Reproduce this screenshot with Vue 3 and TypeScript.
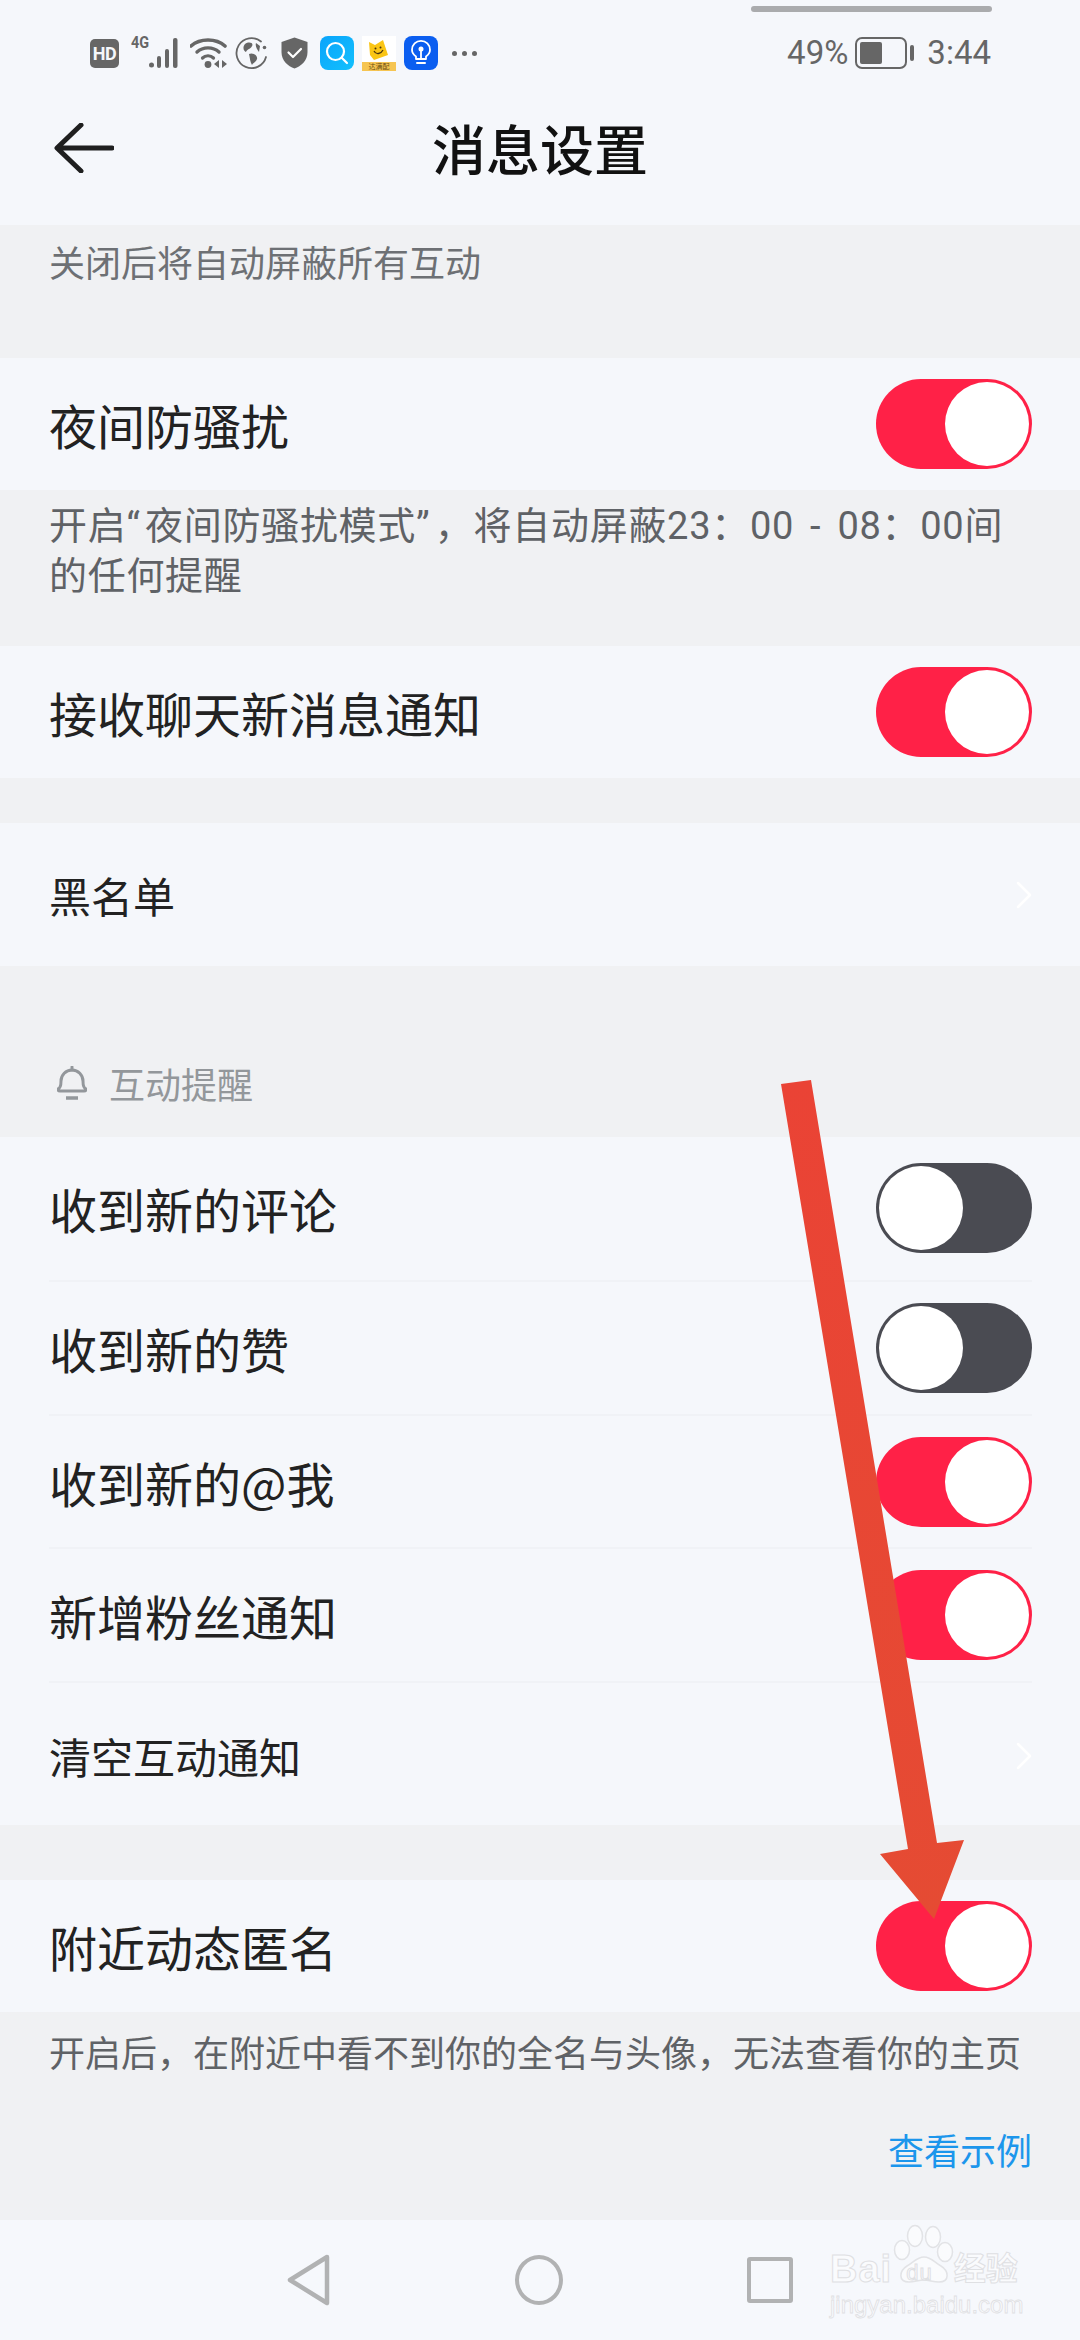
<script setup lang="ts">
interface Row { label: string; on?: boolean; link?: boolean }
const notifyRows: Row[] = [
  { label: '收到新的评论', on: false },
  { label: '收到新的赞', on: false },
  { label: '收到新的@我', on: true },
  { label: '新增粉丝通知', on: true },
  { label: '清空互动通知', link: true },
]
</script>

<template>
  <div class="page">
    <header class="top">
      <div class="status">
        <div class="status-left">
          <span class="hd">HD</span>
          <span class="net">
            <span class="fourg">4G</span>
            <svg width="34" height="32" viewBox="0 0 34 32" class="signal">
              <circle cx="2.5" cy="28" r="2.5" fill="#666" />
              <rect x="8" y="19" width="4" height="12" rx="2" fill="#666" />
              <rect x="16" y="12" width="4" height="19" rx="2" fill="#666" />
              <rect x="24" y="1" width="4.500" height="30" rx="2" fill="#666" />
            </svg>
          </span>
          <svg width="38" height="32" viewBox="0 0 38 32" class="ic-wifi">
            <path d="M1 9C10 1 26 1 35 9" fill="none" stroke="#666" stroke-width="3.6" stroke-linecap="round" />
            <path d="M7 15C13 9.500 23 9.500 29 15" fill="none" stroke="#666" stroke-width="3.400" stroke-linecap="round" />
            <path d="M12.500 21C15.500 18 20.500 18 23.500 21" fill="none" stroke="#666" stroke-width="3.200" stroke-linecap="round" />
            <circle cx="18" cy="27.500" r="3.400" fill="#666" />
            <path d="M29 23V31L24 27ZM32 23V31L37 27Z" fill="#666" />
          </svg>
          <svg width="33" height="33" viewBox="0 0 33 33" class="ic-globe">
            <path d="M26 4.500A15 15 0 1 0 31 20" fill="none" stroke="#666" stroke-width="1.800" stroke-linecap="round" />
            <circle cx="29.500" cy="10.500" r="1.800" fill="#666" />
            <path d="M10 7C14 4 19 6 17 9C16 12 12 12 11 15C9 14 7 11 10 7ZM14 17C18 15 23 19 22 22C21 25 18 26 17 28C15 25 15 21 14 17ZM21 6L25 9L24 15C22 12 20 9 21 6Z" fill="#666" />
          </svg>
          <svg width="27" height="32" viewBox="0 0 27 32" class="ic-shield">
            <path d="M13.500 0.500L26.500 5V15C26.500 24 20 29 13.500 31.500C7 29 0.500 24 0.500 15V5Z" fill="#666" />
            <path d="M7.500 15.500L12 20L20 12" fill="none" stroke="#fff" stroke-width="2.200" stroke-linecap="round" stroke-linejoin="round" />
          </svg>
          <span class="app app-search">
            <svg width="34" height="34" viewBox="0 0 34 34">
              <circle cx="15.500" cy="15.500" r="8.500" fill="none" stroke="#fff" stroke-width="2.200" />
              <path d="M22 22L27 27" stroke="#fff" stroke-width="2.200" stroke-linecap="round" />
            </svg>
          </span>
          <span class="app app-yellow">
            <svg width="34" height="35" viewBox="0 0 34 35">
              <rect width="34" height="35" fill="#fff" />
              <rect y="26" width="34" height="9" fill="#f6c552" />
              <path d="M7 6L13 9L21 4L26 19L12 24L8 19Z" fill="#fac515" />
              <path d="M12 15C14 19 19 18 21 14" fill="none" stroke="#4a3510" stroke-width="1.300" />
              <circle cx="13.500" cy="12.500" r="1" fill="#4a3510" />
              <circle cx="18.500" cy="11.500" r="1" fill="#4a3510" />
              <text x="17" y="33" font-size="7" fill="#6b4f14" text-anchor="middle" font-family="Noto Sans CJK SC">达满配</text>
            </svg>
          </span>
          <span class="app app-bulb">
            <svg width="34" height="34" viewBox="0 0 34 34">
              <path d="M12 23V20.500C9.500 18.800 8 16.200 8 13.800A9 9 0 0 1 26 13.800C26 16.200 24.500 18.800 22 20.500V23Z" fill="none" stroke="#fff" stroke-width="1.800" stroke-linejoin="round" />
              <path d="M13 27H21" stroke="#fff" stroke-width="2" stroke-linecap="round" />
              <path d="M17 22V15" stroke="#fff" stroke-width="1.800" />
              <circle cx="17" cy="13" r="2.500" fill="#fff" />
            </svg>
          </span>
          <span class="dots"><i></i><i></i><i></i></span>
        </div>
        <div class="status-right">
          <span>49%</span>
          <span class="battery"><b></b></span>
          <span class="nub"></span>
          <span class="clock">3:44</span>
        </div>
      </div>
      <div class="titlebar">
        <svg class="back" width="60" height="50" viewBox="0 0 60 50">
          <path d="M58 25H4M27 2L3 25L27 48" fill="none" stroke="#1f1f1f" stroke-width="5" stroke-linecap="round" stroke-linejoin="round" />
        </svg>
        <h1>消息设置</h1>
      </div>
    </header>

    <p class="note note-first">关闭后将自动屏蔽所有互动</p>

    <section class="row row-switch">
      <span class="label">夜间防骚扰</span>
      <span class="toggle on"><i></i></span>
    </section>
    <p class="note note-two">开启“&#8202;夜间防骚扰模式”&#8202;，将自动屏蔽23：00 - 08：00间的任何提醒</p>

    <section class="row row-switch">
      <span class="label">接收聊天新消息通知</span>
      <span class="toggle on"><i></i></span>
    </section>
    <div class="gap gap-45"></div>

    <section class="row row-link">
      <span class="label small">黑名单</span>
      <svg class="chev" width="16" height="28" viewBox="0 0 16 28"><path d="M2 2L14 14L2 26" fill="none" stroke="#fff" stroke-width="2.500" stroke-linecap="round" stroke-linejoin="round" /></svg>
    </section>

    <div class="group-head">
      <svg width="30" height="34" viewBox="0 0 30 34">
        <path d="M3 25C3 25 1 25 1 23C4 22 4 18 4 15A11 11 0 0 1 26 15C26 18 26 22 29 23C29 25 27 25 27 25Z" fill="none" stroke="#93979b" stroke-width="3" stroke-linejoin="round" />
        <path d="M15 1V4" stroke="#93979b" stroke-width="3" stroke-linecap="round" />
        <path d="M9 32H21" stroke="#93979b" stroke-width="3.500" />
      </svg>
      <span>互动提醒</span>
    </div>

    <section class="list">
      <div v-for="r in notifyRows" :key="r.label" class="list-row" :class="{ 'is-link': r.link }">
        <span class="label" :class="{ small: r.link }">{{ r.label }}</span>
        <svg v-if="r.link" class="chev" width="16" height="28" viewBox="0 0 16 28"><path d="M2 2L14 14L2 26" fill="none" stroke="#fff" stroke-width="2.500" stroke-linecap="round" stroke-linejoin="round" /></svg>
        <span v-else class="toggle" :class="{ on: r.on }"><i></i></span>
      </div>
    </section>
    <div class="gap gap-55"></div>

    <section class="row row-switch">
      <span class="label">附近动态匿名</span>
      <span class="toggle on"><i></i></span>
    </section>
    <div class="foot">
      <p class="note-last">开启后，在附近中看不到你的全名与头像，无法查看你的主页</p>
      <a class="example">查看示例</a>
    </div>

    <nav class="nav">
      <svg width="44" height="52" viewBox="0 0 44 52"><path d="M40 3L3 26L40 49Z" fill="none" stroke="#b1b2b3" stroke-width="4.500" stroke-linejoin="round" /></svg>
      <span class="nav-circle"></span>
      <span class="nav-square"></span>
    </nav>

    <!-- baidu watermark, lying over the nav bar -->
    <div class="mark">
      <svg class="paw" width="66" height="70" viewBox="0 0 66 70">
        <g fill="#fafbfd" stroke="#e2e3e6" stroke-width="1.500">
          <ellipse cx="11" cy="26" rx="7.500" ry="9.500" />
          <ellipse cx="24" cy="12" rx="7.500" ry="10.500" />
          <ellipse cx="42" cy="13" rx="7.500" ry="10.500" />
          <ellipse cx="54" cy="28" rx="7.500" ry="9.500" />
          <path d="M33 33C40 33 43 38 50 42C58 47 59 58 48 58C42 58 38 56 33 56C28 56 23 58 18 58C7 58 8 47 16 42C23 38 26 33 33 33Z" />
        </g>
      </svg>
      <div class="mark-top"><span class="bai">Bai</span><span class="du">du</span><span class="jy">经验</span></div>
      <div class="mark-url">jingyan.baidu.com</div>
    </div>

    <!-- annotation arrow drawn on top of the screenshot -->
    <svg class="arrow" width="1080" height="2340" viewBox="0 0 1080 2340">
      <defs>
        <linearGradient id="arrowFill" x1="0" y1="1080" x2="0" y2="1920" gradientUnits="userSpaceOnUse">
          <stop offset="0" stop-color="#ea4335" />
          <stop offset="1" stop-color="#e54b33" />
        </linearGradient>
      </defs>
      <path d="M781 1084L811 1080L937 1843L964 1840L934 1919L880 1854L908 1849Z" fill="url(#arrowFill)" />
    </svg>
  </div>
</template>

<style>
html, body { margin: 0; background: #f0f1f3; }
</style>

<style scoped>
.page {
  position: relative;
  width: 1080px;
  height: 2340px;
  overflow: hidden;
  background: #f0f1f3;
  font-family: "Noto Sans CJK SC", "Noto Sans", sans-serif;
  color: #222;
}
p, h1 { margin: 0; }

.top { height: 225px; background: #f5f7fb; position: relative; }
.top::before {
  content: "";
  position: absolute;
  left: 751px;
  top: 6px;
  width: 241px;
  height: 6px;
  border-radius: 3px;
  background: #aaabad;
}
.status {
  height: 58px;
  padding: 24px 89px 0 90px;
  display: flex;
  justify-content: space-between;
  align-items: center;
}
.status-left { display: flex; align-items: center; }
.hd {
  width: 29px;
  height: 29px;
  border-radius: 5px;
  background: #666;
  color: #f5f7fb;
  font: 700 18px/29px "Roboto", sans-serif;
  text-align: center;
  letter-spacing: -0.5px;
}
.net { display: flex; margin-left: 12px; position: relative; width: 49px; height: 32px; }
.fourg { font: 700 17px/15px "Roboto", sans-serif; color: #666; margin-top: -2px; transform: scaleX(0.85); transform-origin: left; }
.signal { position: absolute; left: 18px; top: 0; }
.ic-wifi { margin-left: 10px; }
.ic-globe { margin-left: 7px; }
.ic-shield { margin-left: 13px; }
.app { width: 34px; height: 34px; border-radius: 8px; overflow: hidden; display: block; }
.app svg { display: block; }
.app-search { margin-left: 12px; background: linear-gradient(135deg, #0aa4fb, #12c0fd); }
.app-yellow { margin-left: 8px; border-radius: 0; height: 35px; }
.app-bulb { margin-left: 8px; background: #0b5ef0; }
.dots { display: flex; gap: 5px; margin-left: 14px; }
.dots i { width: 5px; height: 5px; border-radius: 50%; background: #666; }

.status-right {
  display: flex;
  align-items: center;
  color: #666;
  font: 400 33px/34px "Roboto", sans-serif;
}
.battery {
  margin-left: 7px;
  width: 52px;
  height: 32px;
  box-sizing: border-box;
  border: 2.500px solid #666;
  border-radius: 7px;
  padding: 3px;
  display: flex;
}
.battery b { width: 22px; background: #666; border-radius: 2px; }
.nub { width: 4px; height: 16px; background: #666; border-radius: 2px; margin-left: 3px; }
.clock { margin-left: 13px; }

.titlebar {
  height: 167px;
  display: flex;
  align-items: center;
  justify-content: center;
  position: relative;
  padding-bottom: 36px;
  box-sizing: border-box;
}
.back { position: absolute; left: 54px; top: 41px; }
h1 { font-size: 54px; font-weight: 500; line-height: 60px; color: #111; }

.note { font-size: 36px; line-height: 50px; color: #6d7074; padding: 0 49px; }
.note-first { height: 133px; box-sizing: border-box; padding-top: 11px; }
.note-two {
  height: 156px;
  box-sizing: border-box;
  padding: 11px 60px 0 49px;
  color: #5f6266;
  font-family: "Roboto", "Noto Sans CJK SC", sans-serif;
  font-size: 38px;
  letter-spacing: 0.7px;
  word-spacing: 6px;
}

.row {
  background: #f5f7fb;
  display: flex;
  align-items: center;
  justify-content: space-between;
  padding: 0 48px 0 49px;
}
.row-switch { height: 132px; }
.row-link { height: 143px; }
.label { font-size: 48px; line-height: 60px; color: #222; }
.label.small { font-size: 42px; }

.toggle {
  width: 156px;
  height: 90px;
  box-sizing: border-box;
  border-radius: 45px;
  background: #4a4b52;
  padding: 3px;
  display: flex;
  justify-content: flex-start;
}
.toggle i { width: 84px; height: 84px; border-radius: 50%; background: #fff; }
.toggle.on { background: #ff2147; justify-content: flex-end; }

.gap-45 { height: 45px; }
.gap-55 { height: 55px; }

.group-head {
  height: 171px;
  box-sizing: border-box;
  padding: 95px 0 0 57px;
  display: flex;
  align-items: flex-start;
  gap: 22px;
  color: #93979b;
  font-size: 36px;
  line-height: 44px;
}
.group-head svg { margin-top: 5px; }

.list { background: #f5f7fb; padding: 0 48px 0 49px; height: 688px; box-sizing: border-box; }
.list-row {
  height: 133px;
  display: flex;
  align-items: center;
  justify-content: space-between;
  border-bottom: 2px solid #f0f2f6;
  box-sizing: border-box;
}
.list-row:first-child { height: 145px; padding-bottom: 1px; }
.list-row:nth-child(2) { height: 134px; }
.list-row:nth-child(4) { height: 134px; }
.list-row.is-link { border-bottom: 0; height: 143px; padding-top: 2px; }

.foot { height: 208px; box-sizing: border-box; padding: 14px 49px 0; position: relative; }
.note-last { font-size: 36px; line-height: 50px; color: #5f6266; white-space: nowrap; }
.example {
  display: block;
  margin-top: 48px;
  text-align: right;
  font-size: 36px;
  line-height: 50px;
  color: #1c96ec;
  margin-right: -1px;
}

.nav {
  height: 120px;
  background: #f6f8fc;
  position: relative;
  display: grid;
  grid-template-columns: 44px 48px 46px;
  justify-content: start;
  align-items: center;
  column-gap: 184px;
  padding-left: 287px;
  box-sizing: border-box;
}
.nav svg { display: block; }
.nav-circle { width: 48px; height: 50px; border: 4.500px solid #b1b2b3; border-radius: 50%; box-sizing: border-box; }
.nav-square { width: 46px; height: 46px; border: 4.500px solid #b1b2b3; border-radius: 3px; box-sizing: border-box; }

.mark { position: absolute; left: 829px; top: 2224px; width: 195px; height: 100px; }
.paw { position: absolute; left: 62px; top: 0; }
.mark-top {
  position: absolute;
  left: 1px;
  top: 20px;
  display: flex;
  align-items: baseline;
  color: #fafbfd;
  -webkit-text-stroke: 1px #dfe0e3;
  font: 700 38px/48px "Liberation Sans", sans-serif;
  white-space: nowrap;
  letter-spacing: 1px;
}
.du { font-size: 22px; margin-left: 14px; font-weight: 400; position: relative; top: -2px; }
.jy { font: 700 32px/48px "Noto Sans CJK SC", sans-serif; margin-left: 21px; position: relative; top: -2px; letter-spacing: 0; }
.mark-url {
  position: absolute;
  left: 1px;
  top: 66px;
  font: 400 24px/30px "Liberation Sans", sans-serif;
  color: #fafbfd;
  -webkit-text-stroke: 0.8px #dfe0e3;
  white-space: nowrap;
}

.arrow { position: absolute; left: 0; top: 0; pointer-events: none; }
</style>
